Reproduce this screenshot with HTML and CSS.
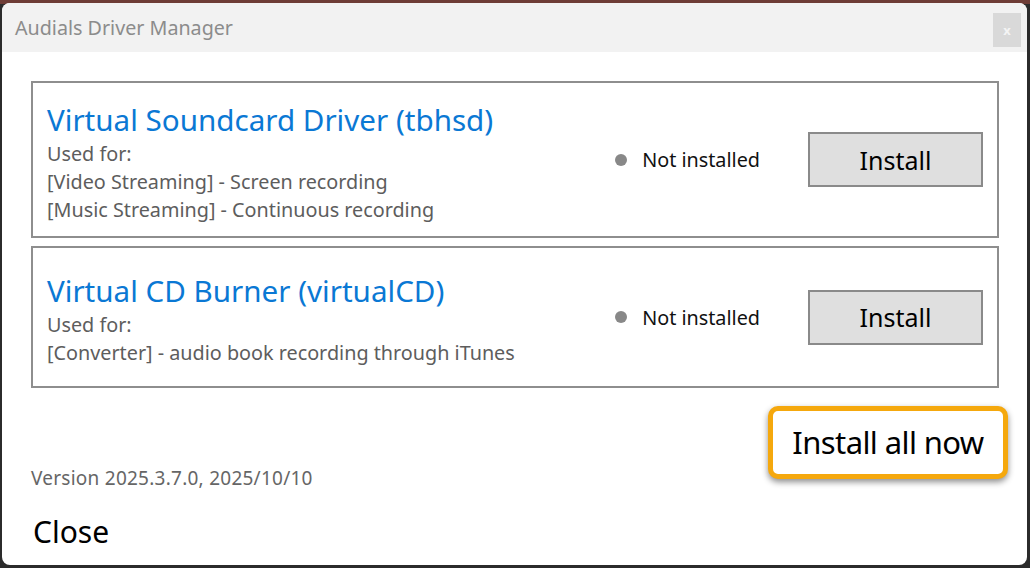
FILE: index.html
```html
<!DOCTYPE html>
<html lang="en">
<head>
    <meta charset="UTF-8">
    <title>Audials Driver Manager</title>
    <link rel="stylesheet" href="styles.css">
</head>
<body>
    <div class="window">
        <div class="titlebar">
            <span class="title">Audials Driver Manager</span>
            <span class="close-x">x</span>
        </div>

        <div class="content">
            <!-- Driver 1 -->
            <div class="driver-card">
                <div class="driver-info">
                    <div class="driver-name">Virtual Soundcard Driver (tbhsd)</div>
                    <div class="driver-use">Used for:</div>
                    <div class="driver-use">[Video Streaming] - Screen recording</div>
                    <div class="driver-use">[Music Streaming] - Continuous recording</div>
                </div>
                <div class="status"><span class="dot"></span>Not installed</div>
                <button class="install-btn">Install</button>
            </div>

            <!-- Driver 2 -->
            <div class="driver-card short">
                <div class="driver-info">
                    <div class="driver-name">Virtual CD Burner (virtualCD)</div>
                    <div class="driver-use">Used for:</div>
                    <div class="driver-use">[Converter] - audio book recording through iTunes</div>
                </div>
                <div class="status"><span class="dot"></span>Not installed</div>
                <button class="install-btn">Install</button>
            </div>

            <div class="footer">
                <div class="footer-left">
                    <div class="version">Version 2025.3.7.0, 2025/10/10</div>
                    <div class="close-link">Close</div>
                </div>
                <button class="install-all">Install all now</button>
            </div>
        </div>
    </div>
</body>
</html>
```

FILE: styles.css
```css
body {
    margin: 0;
    background: linear-gradient(#6e3c36 0, #6e3c36 4px, #2b2b2b 4px);
    font-family: "Noto Sans", "Open Sans", sans-serif;
    height: 568px;
    overflow: hidden;
}
.window {
    margin: 3px 3px 0 2px;
    height: 562px;
    background: #fff;
    border-radius: 8px;
    overflow: hidden;
    display: flex;
    flex-direction: column;
}
.titlebar {
    height: 49px;
    background-color: #f2f2f2;
    display: flex;
    justify-content: space-between;
    align-items: center;
    padding-left: 13px;
    padding-right: 6px;
}
.title {
    font-size: 19.7px;
    color: #8c8c8c;
}
.close-x {
    align-self: flex-start;
    margin-top: 10px;
    width: 28px;
    height: 34px;
    background-color: #d9d9d9;
    color: #f4f4f4;
    font-size: 13px;
    font-weight: bold;
    display: flex;
    align-items: center;
    justify-content: center;
}
.content {
    padding: 29px 28px 0 29px;
    display: flex;
    flex-direction: column;
    flex: 1;
}
.driver-card {
    border: 2px solid #8e8e8e;
    display: flex;
    align-items: center;
    padding: 0 14px;
    margin-bottom: 8px;
}
.driver-info {
    flex: 1;
    padding: 17px 0 12px 0;
}
.short .driver-info {
    padding: 23px 0 19px 0;
}
.driver-name {
    font-size: 29.6px;
    color: #0a78d4;
    line-height: 40px;
}
.driver-use {
    font-size: 19.8px;
    color: #5d5d5d;
    line-height: 28px;
}
.status {
    display: flex;
    align-items: center;
    font-size: 19.8px;
    color: #111;
    margin-right: 48px;
}
.dot {
    width: 12px;
    height: 12px;
    border-radius: 50%;
    background-color: #888;
    margin-right: 15px;
}
.install-btn {
    width: 175px;
    height: 55px;
    background-color: #dfdfdf;
    border: 2px solid #8a8a8a;
    font-family: inherit;
    font-size: 25px;
    color: #000;
    padding: 0;
}
.footer {
    display: flex;
    justify-content: space-between;
    align-items: flex-start;
    margin-top: 10px;
    margin-right: -9px;
}
.footer-left {
    padding-top: 59px;
}
.version {
    font-size: 19px;
    line-height: 26px;
    color: #666;
    letter-spacing: 0.25px;
}
.close-link {
    font-size: 30px;
    line-height: 41px;
    color: #000;
    margin-top: 20px;
    margin-left: 2px;
}
.install-all {
    width: 240px;
    height: 73px;
    background: #fff;
    border: 5px solid #f5a80d;
    border-radius: 10px;
    box-shadow: 0 3px 6px rgba(0, 0, 0, 0.45);
    font-family: inherit;
    font-size: 31px;
    letter-spacing: -0.6px;
    color: #000;
    padding: 0 0 2px 0;
}
```
